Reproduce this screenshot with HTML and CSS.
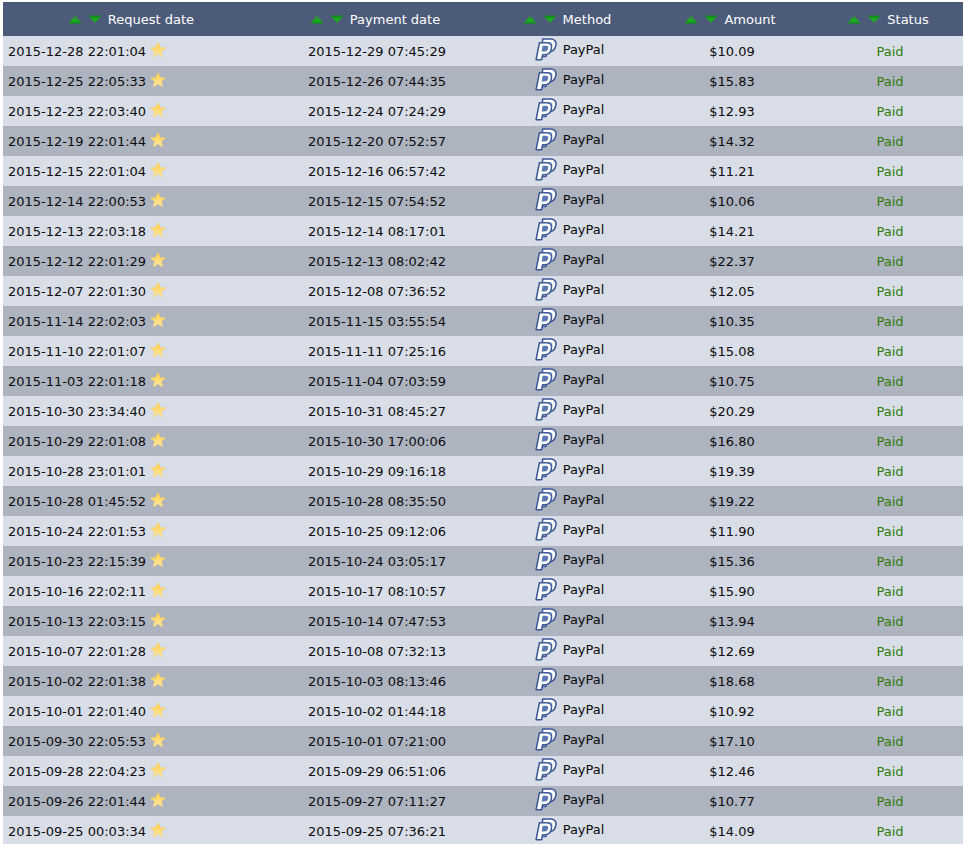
FILE: index.html
```html
<!DOCTYPE html>
<html lang="en">
<head>
<meta charset="utf-8">
<title>Payments</title>
<link rel="stylesheet" href="styles.css">
</head>
<body>
<svg class="defs" width="0" height="0" aria-hidden="true">
<defs>
<linearGradient id="gu" x1="0" y1="0" x2="0" y2="1"><stop offset="0" stop-color="#3d7f45"/><stop offset=".6" stop-color="#18b020"/><stop offset="1" stop-color="#0f8f18"/></linearGradient>
<linearGradient id="gd" x1="0" y1="0" x2="0" y2="1"><stop offset="0" stop-color="#0e7d18"/><stop offset=".45" stop-color="#18b020"/><stop offset="1" stop-color="#3d7f45"/></linearGradient>
<linearGradient id="gs" x1="0" y1="0" x2="0" y2="1"><stop offset="0" stop-color="#ffcd3a"/><stop offset="1" stop-color="#ffe9b0"/></linearGradient>
<symbol id="up" viewBox="0 0 14 9"><path d="M7 0.5 L13.5 8.5 H0.5 Z" fill="url(#gu)"/></symbol>
<symbol id="down" viewBox="0 0 14 9"><path d="M0.5 0.5 H13.5 L7 8.5 Z" fill="url(#gd)"/></symbol>
<symbol id="star" viewBox="0 0 16 16"><path d="M8 0.6 L10.2 5.5 L15.6 6 L11.5 9.6 L12.8 15 L8 12.1 L3.2 15 L4.5 9.6 L0.4 6 L5.8 5.5 Z" fill="url(#gs)" stroke="#f5cf70" stroke-width=".6"/></symbol>
<symbol id="pp" viewBox="0 0 24 24">
<path d="M9 1 H17 C21.5 1 23.6 3.6 22.8 7.6 C22 12 18.8 14.6 14.8 14.6 H13.4 L12.4 19.4 H8 Z" fill="#fff" stroke="#3a5796" stroke-width="1.6" stroke-linejoin="round"/>
<path d="M12 4.2 H16 C18.4 4.2 19.6 5.6 19.1 7.8 C18.6 10.2 16.8 11.6 14.6 11.6 H10.6 Z" fill="#8da4d0"/>
<path d="M5.6 5 H13 C17.2 5 19 7.4 18.2 11 C17.4 15 14.4 17.4 10.8 17.4 H9 L8 22.6 H2.2 Z" fill="#fff" stroke="#3a5796" stroke-width="1.6" stroke-linejoin="round"/>
<path d="M9 8.2 H12.4 C14.4 8.2 15.2 9.4 14.8 11 C14.4 13 13 14.2 11 14.2 H8 Z" fill="#5a78b4"/>
</symbol>
</defs>
</svg>
<table class="payments">
<colgroup><col class="c1"><col class="c2"><col class="c3"><col class="c4"><col class="c5"></colgroup>
<thead>
<tr>
<th><svg class="arrow"><use href="#up"/></svg><svg class="arrow"><use href="#down"/></svg>Request date</th>
<th><svg class="arrow"><use href="#up"/></svg><svg class="arrow"><use href="#down"/></svg>Payment date</th>
<th><svg class="arrow"><use href="#up"/></svg><svg class="arrow"><use href="#down"/></svg>Method</th>
<th><svg class="arrow"><use href="#up"/></svg><svg class="arrow"><use href="#down"/></svg>Amount</th>
<th><svg class="arrow"><use href="#up"/></svg><svg class="arrow"><use href="#down"/></svg>Status</th>
</tr>
</thead>
<tbody>
<tr><td class="req">2015-12-28 22:01:04<svg class="star"><use href="#star"/></svg></td><td>2015-12-29 07:45:29</td><td><span class="method"><svg class="pp"><use href="#pp"/></svg>PayPal</span></td><td>$10.09</td><td class="paid">Paid</td></tr>
<tr><td class="req">2015-12-25 22:05:33<svg class="star"><use href="#star"/></svg></td><td>2015-12-26 07:44:35</td><td><span class="method"><svg class="pp"><use href="#pp"/></svg>PayPal</span></td><td>$15.83</td><td class="paid">Paid</td></tr>
<tr><td class="req">2015-12-23 22:03:40<svg class="star"><use href="#star"/></svg></td><td>2015-12-24 07:24:29</td><td><span class="method"><svg class="pp"><use href="#pp"/></svg>PayPal</span></td><td>$12.93</td><td class="paid">Paid</td></tr>
<tr><td class="req">2015-12-19 22:01:44<svg class="star"><use href="#star"/></svg></td><td>2015-12-20 07:52:57</td><td><span class="method"><svg class="pp"><use href="#pp"/></svg>PayPal</span></td><td>$14.32</td><td class="paid">Paid</td></tr>
<tr><td class="req">2015-12-15 22:01:04<svg class="star"><use href="#star"/></svg></td><td>2015-12-16 06:57:42</td><td><span class="method"><svg class="pp"><use href="#pp"/></svg>PayPal</span></td><td>$11.21</td><td class="paid">Paid</td></tr>
<tr><td class="req">2015-12-14 22:00:53<svg class="star"><use href="#star"/></svg></td><td>2015-12-15 07:54:52</td><td><span class="method"><svg class="pp"><use href="#pp"/></svg>PayPal</span></td><td>$10.06</td><td class="paid">Paid</td></tr>
<tr><td class="req">2015-12-13 22:03:18<svg class="star"><use href="#star"/></svg></td><td>2015-12-14 08:17:01</td><td><span class="method"><svg class="pp"><use href="#pp"/></svg>PayPal</span></td><td>$14.21</td><td class="paid">Paid</td></tr>
<tr><td class="req">2015-12-12 22:01:29<svg class="star"><use href="#star"/></svg></td><td>2015-12-13 08:02:42</td><td><span class="method"><svg class="pp"><use href="#pp"/></svg>PayPal</span></td><td>$22.37</td><td class="paid">Paid</td></tr>
<tr><td class="req">2015-12-07 22:01:30<svg class="star"><use href="#star"/></svg></td><td>2015-12-08 07:36:52</td><td><span class="method"><svg class="pp"><use href="#pp"/></svg>PayPal</span></td><td>$12.05</td><td class="paid">Paid</td></tr>
<tr><td class="req">2015-11-14 22:02:03<svg class="star"><use href="#star"/></svg></td><td>2015-11-15 03:55:54</td><td><span class="method"><svg class="pp"><use href="#pp"/></svg>PayPal</span></td><td>$10.35</td><td class="paid">Paid</td></tr>
<tr><td class="req">2015-11-10 22:01:07<svg class="star"><use href="#star"/></svg></td><td>2015-11-11 07:25:16</td><td><span class="method"><svg class="pp"><use href="#pp"/></svg>PayPal</span></td><td>$15.08</td><td class="paid">Paid</td></tr>
<tr><td class="req">2015-11-03 22:01:18<svg class="star"><use href="#star"/></svg></td><td>2015-11-04 07:03:59</td><td><span class="method"><svg class="pp"><use href="#pp"/></svg>PayPal</span></td><td>$10.75</td><td class="paid">Paid</td></tr>
<tr><td class="req">2015-10-30 23:34:40<svg class="star"><use href="#star"/></svg></td><td>2015-10-31 08:45:27</td><td><span class="method"><svg class="pp"><use href="#pp"/></svg>PayPal</span></td><td>$20.29</td><td class="paid">Paid</td></tr>
<tr><td class="req">2015-10-29 22:01:08<svg class="star"><use href="#star"/></svg></td><td>2015-10-30 17:00:06</td><td><span class="method"><svg class="pp"><use href="#pp"/></svg>PayPal</span></td><td>$16.80</td><td class="paid">Paid</td></tr>
<tr><td class="req">2015-10-28 23:01:01<svg class="star"><use href="#star"/></svg></td><td>2015-10-29 09:16:18</td><td><span class="method"><svg class="pp"><use href="#pp"/></svg>PayPal</span></td><td>$19.39</td><td class="paid">Paid</td></tr>
<tr><td class="req">2015-10-28 01:45:52<svg class="star"><use href="#star"/></svg></td><td>2015-10-28 08:35:50</td><td><span class="method"><svg class="pp"><use href="#pp"/></svg>PayPal</span></td><td>$19.22</td><td class="paid">Paid</td></tr>
<tr><td class="req">2015-10-24 22:01:53<svg class="star"><use href="#star"/></svg></td><td>2015-10-25 09:12:06</td><td><span class="method"><svg class="pp"><use href="#pp"/></svg>PayPal</span></td><td>$11.90</td><td class="paid">Paid</td></tr>
<tr><td class="req">2015-10-23 22:15:39<svg class="star"><use href="#star"/></svg></td><td>2015-10-24 03:05:17</td><td><span class="method"><svg class="pp"><use href="#pp"/></svg>PayPal</span></td><td>$15.36</td><td class="paid">Paid</td></tr>
<tr><td class="req">2015-10-16 22:02:11<svg class="star"><use href="#star"/></svg></td><td>2015-10-17 08:10:57</td><td><span class="method"><svg class="pp"><use href="#pp"/></svg>PayPal</span></td><td>$15.90</td><td class="paid">Paid</td></tr>
<tr><td class="req">2015-10-13 22:03:15<svg class="star"><use href="#star"/></svg></td><td>2015-10-14 07:47:53</td><td><span class="method"><svg class="pp"><use href="#pp"/></svg>PayPal</span></td><td>$13.94</td><td class="paid">Paid</td></tr>
<tr><td class="req">2015-10-07 22:01:28<svg class="star"><use href="#star"/></svg></td><td>2015-10-08 07:32:13</td><td><span class="method"><svg class="pp"><use href="#pp"/></svg>PayPal</span></td><td>$12.69</td><td class="paid">Paid</td></tr>
<tr><td class="req">2015-10-02 22:01:38<svg class="star"><use href="#star"/></svg></td><td>2015-10-03 08:13:46</td><td><span class="method"><svg class="pp"><use href="#pp"/></svg>PayPal</span></td><td>$18.68</td><td class="paid">Paid</td></tr>
<tr><td class="req">2015-10-01 22:01:40<svg class="star"><use href="#star"/></svg></td><td>2015-10-02 01:44:18</td><td><span class="method"><svg class="pp"><use href="#pp"/></svg>PayPal</span></td><td>$10.92</td><td class="paid">Paid</td></tr>
<tr><td class="req">2015-09-30 22:05:53<svg class="star"><use href="#star"/></svg></td><td>2015-10-01 07:21:00</td><td><span class="method"><svg class="pp"><use href="#pp"/></svg>PayPal</span></td><td>$17.10</td><td class="paid">Paid</td></tr>
<tr><td class="req">2015-09-28 22:04:23<svg class="star"><use href="#star"/></svg></td><td>2015-09-29 06:51:06</td><td><span class="method"><svg class="pp"><use href="#pp"/></svg>PayPal</span></td><td>$12.46</td><td class="paid">Paid</td></tr>
<tr><td class="req">2015-09-26 22:01:44<svg class="star"><use href="#star"/></svg></td><td>2015-09-27 07:11:27</td><td><span class="method"><svg class="pp"><use href="#pp"/></svg>PayPal</span></td><td>$10.77</td><td class="paid">Paid</td></tr>
<tr><td class="req">2015-09-25 00:03:34<svg class="star"><use href="#star"/></svg></td><td>2015-09-25 07:36:21</td><td><span class="method"><svg class="pp"><use href="#pp"/></svg>PayPal</span></td><td>$14.09</td><td class="paid">Paid</td></tr>
</tbody>
</table>
</body>
</html>
```
FILE: styles.css
```css
html { overflow: hidden; height: 100%; background: #fff; }
body { margin: 0; padding: 2px 0 0 3px; font-family: "DejaVu Sans", "Noto Sans", sans-serif; font-size: 13px; color: #0c0c0c; height: 100%; box-sizing: border-box; overflow: hidden; }
.defs { position: absolute; }
.payments { border-collapse: collapse; table-layout: fixed; width: 960px; }
.c1 { width: 260px; }
.c2 { width: 228px; }
.c3 { width: 156px; }
.c4 { width: 170px; }
.c5 { width: 146px; }
thead tr { height: 34px; background: #4c5b7a; }
th { padding: 0 4px 0 0; color: #fff; font-weight: 400; text-align: center; white-space: nowrap; }
tbody tr { height: 30px; background: #d8dde7; }
tbody tr:nth-child(even) { background: #adb3bf; }
td { padding: 0; text-align: center; white-space: nowrap; }
td.req { text-align: left; padding-left: 5px; }
.arrow { width: 14px; height: 9px; margin-right: 6px; }
.star { width: 16px; height: 16px; margin: -8px 0 -8px 4px; vertical-align: 6px; }
.method { display: inline-flex; align-items: center; gap: 6px; }
.pp { width: 23px; height: 23px; }
.paid { color: #2f7c0a; }
```
